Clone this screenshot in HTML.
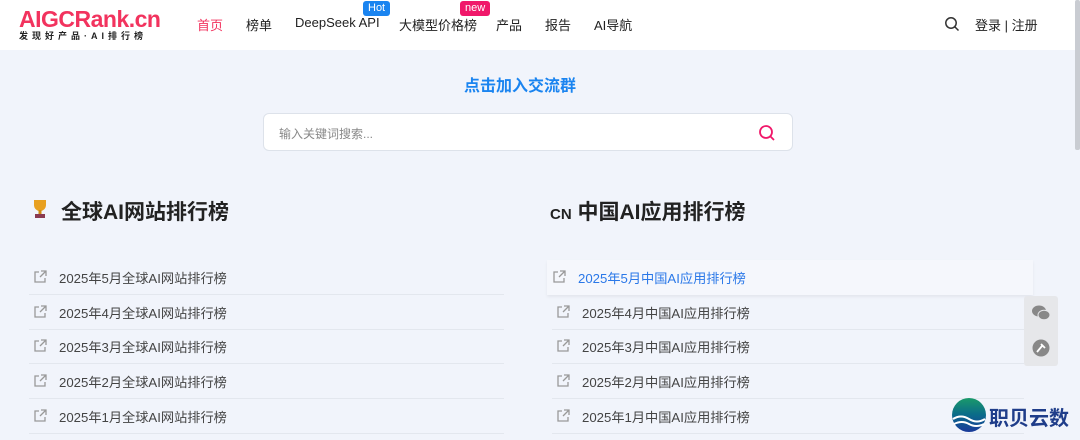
<!DOCTYPE html>
<html><head><meta charset="utf-8">
<style>
*{margin:0;padding:0;box-sizing:border-box}
body{width:1080px;height:440px;overflow:hidden;background:#f1f4fb;font-family:"Liberation Sans","Noto Sans CJK SC",sans-serif;color:#333;position:relative}
.hdr{position:absolute;left:0;top:0;width:1080px;height:50px;background:#fff}
.logo{position:absolute;left:19px;top:6px;color:#f2335e;font-size:23px;font-weight:bold;letter-spacing:-0.5px}
.logo2{position:absolute;left:19px;top:29px;font-size:9px;font-weight:bold;color:#222;letter-spacing:4px}
.nav{position:absolute;top:15px;font-size:13px;color:#222}
.badge{position:absolute;font-size:11px;line-height:13px;color:#fff;border-radius:3px;padding:1px 5px;top:1px}
.title{position:absolute;top:72px;left:464px;color:#1a84f0;font-size:16px;font-weight:bold}
.search{position:absolute;left:263px;top:113px;width:530px;height:38px;background:#fff;border:1px solid #dde2ea;border-radius:6px}
.search span{position:absolute;left:15px;top:11px;font-size:12px;color:#888}
h2{position:absolute;font-size:21px;font-weight:bold;color:#222}
.item{position:absolute;height:35px;border-bottom:1px solid #e3e7ee;font-size:13.2px;color:#444}
.item svg{position:absolute;left:4px;top:10px}
.item span{position:absolute;left:30px;top:8px}
.side{position:absolute;left:1024px;top:296px;width:34px;height:70px;background:#e6e7ea;border-radius:3px}
</style></head><body>
<div class="hdr">
<div class="logo">AIGCRank.cn</div>
<div class="logo2">发现好产品·AI排行榜</div>
<div class="nav" style="left:197px;color:#f2335e">首页</div>
<div class="nav" style="left:246px">榜单</div>
<div class="nav" style="left:295px">DeepSeek API</div>
<div class="badge" style="left:363px;background:#1a84f0">Hot</div>
<div class="nav" style="left:399px">大模型价格榜</div>
<div class="badge" style="left:460px;background:#f0186a">new</div>
<div class="nav" style="left:496px">产品</div>
<div class="nav" style="left:545px">报告</div>
<div class="nav" style="left:594px">AI导航</div>
<svg style="position:absolute;left:944px;top:16px" width="16" height="16" viewBox="0 0 16 16"><circle cx="7" cy="7" r="5.2" fill="none" stroke="#333" stroke-width="1.5"/><path d="M11 11l3.5 3.5" stroke="#333" stroke-width="1.5"/></svg>
<div class="nav" style="left:975px">登录 | 注册</div>
</div>
<div style="position:absolute;left:1075px;top:0;width:5px;height:150px;background:#c9ccd2;border-radius:2px"></div>
<div class="title">点击加入交流群</div>
<div class="search"><span>输入关键词搜索...</span>
<svg style="position:absolute;left:494px;top:10px" width="18" height="18" viewBox="0 0 18 18"><circle cx="8" cy="8" r="6" fill="none" stroke="#f0186a" stroke-width="1.8"/><path d="M12.5 12.5l3.5 3.5" stroke="#f0186a" stroke-width="1.8"/></svg></div>
<svg style="position:absolute;left:31px;top:199px" width="18" height="20" viewBox="0 0 18 20"><path d="M3 1h12v5a6 6 0 0 1-12 0z" fill="#e8a020"/><rect x="7.5" y="11" width="3" height="4" fill="#d08a10"/><rect x="4" y="15" width="10" height="4" fill="#8a3a50"/></svg>
<h2 style="left:61px;top:196px">全球AI网站排行榜</h2>
<h2 style="left:550px;top:196px"><span style="font-size:15px">CN</span> 中国AI应用排行榜</h2>
<div id="L"></div>
<div style="position:absolute;left:547px;top:260px;width:486px;height:35px;background:#f5f7fc;box-shadow:0 2px 3px rgba(0,0,0,0.06)"></div>
<div class="item" style="left:548px;top:260px;width:485px;border:none"><svg width="14" height="14" viewBox="0 0 14 14"><path d="M6 2H2v10h10V8M8 1h5v5M13 1L7 7" fill="none" stroke="#999" stroke-width="1.3"/></svg><span style="color:#2a78e8">2025年5月中国AI应用排行榜</span></div>
<script>
var svg='<svg width="14" height="14" viewBox="0 0 14 14"><path d="M6 2H2v10h10V8M8 1h5v5M13 1L7 7" fill="none" stroke="#999" stroke-width="1.3"/></svg>';
var h='';
for(var i=0;i<5;i++){h+='<div class="item" style="left:29px;top:'+(260+i*34.7)+'px;width:475px">'+svg+'<span>2025年'+(5-i)+'月全球AI网站排行榜</span></div>';}
for(var i=1;i<5;i++){h+='<div class="item" style="left:552px;top:'+(260+i*34.7)+'px;width:472px">'+svg+'<span>2025年'+(5-i)+'月中国AI应用排行榜</span></div>';}
document.getElementById('L').innerHTML=h;
</script>
<div class="side">
<svg style="position:absolute;left:7px;top:8px" width="20" height="18" viewBox="0 0 20 18"><ellipse cx="8" cy="7" rx="7" ry="5.5" fill="#888"/><ellipse cx="13" cy="11" rx="6" ry="4.8" fill="#888" stroke="#e6e7ea" stroke-width="1"/></svg>
<svg style="position:absolute;left:8px;top:43px" width="18" height="18" viewBox="0 0 18 18"><circle cx="9" cy="9" r="8.5" fill="#888"/><path d="M5 13l5-6M9 5l4 4" stroke="#fff" stroke-width="1.8"/></svg>
</div>
<svg style="position:absolute;left:951px;top:397px" width="36" height="36" viewBox="0 0 36 36"><defs><linearGradient id="g" x1="0" y1="0" x2="0" y2="1"><stop offset="0" stop-color="#1a9a6a"/><stop offset="0.5" stop-color="#0a6a8a"/><stop offset="1" stop-color="#1a3a9a"/></linearGradient></defs><circle cx="18" cy="18" r="17" fill="url(#g)"/><path d="M2 22q8-5 16 0t16 0M3 27q8-4 15 0t15 0" stroke="#fff" stroke-width="2" fill="none"/></svg>
<div style="position:absolute;left:989px;top:402px;font-size:20px;color:#1f3d8a;font-weight:bold">职贝云数</div>
</body></html>
